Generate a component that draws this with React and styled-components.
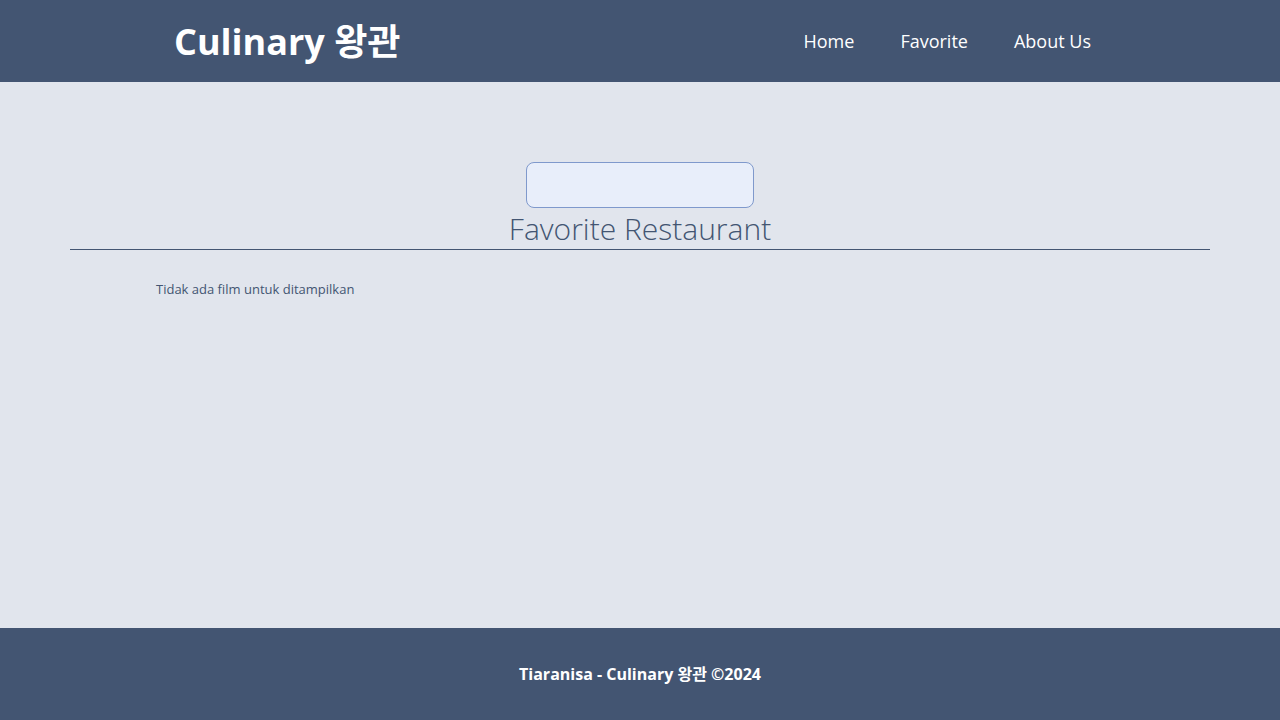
import styled, { createGlobalStyle } from "styled-components";

const GlobalStyle = createGlobalStyle`
  * { box-sizing: border-box; }
  body {
    margin: 0;
    font-family: "Open Sans", "Noto Sans CJK KR", sans-serif;
    background: #e1e5ed;
  }
`;

const Page = styled.div`
  min-height: 100vh;
  display: flex;
  flex-direction: column;
`;

const Header = styled.header`
  height: 82px;
  background: #435572;
  display: flex;
  align-items: center;
  justify-content: space-between;
  padding: 0 166px 0 174px;
`;

const Logo = styled.h1`
  margin: 0 0 4px;
  color: #fff;
  font-size: 36px;
  font-weight: 700;
  font-family: "Open Sans", "Noto Sans CJK KR", sans-serif;
`;

const Nav = styled.nav`
  display: flex;
`;

const NavLink = styled.a`
  color: #fff;
  text-decoration: none;
  font-size: 18px;
  padding: 0 23px;
`;

const Main = styled.main`
  flex: 1;
  padding: 80px 70px 0;
  display: flex;
  flex-direction: column;
  align-items: center;
`;

const SearchInput = styled.input`
  width: 228px;
  height: 46px;
  border: 1px solid #7f99cc;
  border-radius: 8px;
  background: #e8eefa;
  outline: none;
`;

const Title = styled.h2`
  margin: 0;
  width: 100%;
  text-align: center;
  font-size: 30px;
  font-weight: 300;
  line-height: 41px;
  color: #435572;
  border-bottom: 1px solid #435572;
`;

const Empty = styled.p`
  align-self: stretch;
  margin: 30px 0 0 86px;
  font-size: 13px;
  color: #435572;
`;

const Footer = styled.footer`
  height: 92px;
  background: #435572;
  display: flex;
  align-items: center;
  justify-content: center;
  padding-bottom: 2px;
  color: #fff;
  font-weight: 700;
  font-size: 16px;
`;

export default function App() {
  return (
    <Page>
      <GlobalStyle />
      <Header>
        <Logo>Culinary 왕관</Logo>
        <Nav>
          <NavLink href="#">Home</NavLink>
          <NavLink href="#">Favorite</NavLink>
          <NavLink href="#">About Us</NavLink>
        </Nav>
      </Header>
      <Main>
        <SearchInput />
        <Title>Favorite Restaurant</Title>
        <Empty>Tidak ada film untuk ditampilkan</Empty>
      </Main>
      <Footer>Tiaranisa - Culinary 왕관 ©2024</Footer>
    </Page>
  );
}
